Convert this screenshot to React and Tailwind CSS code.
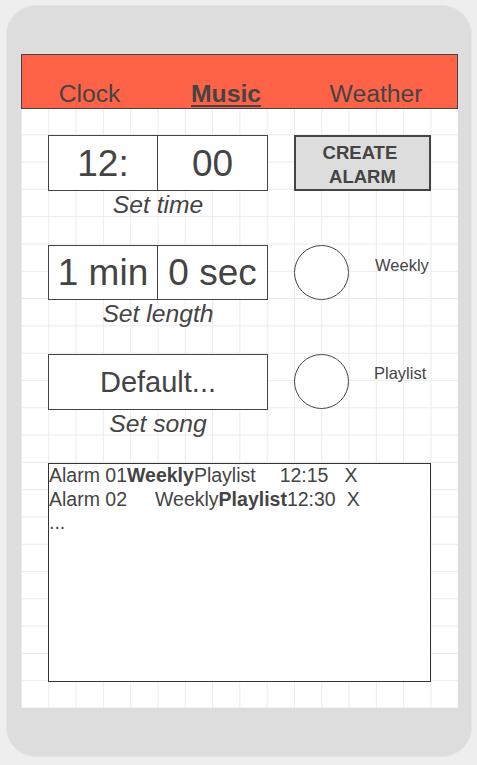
const font = "font-['Liberation_Sans',Arial,sans-serif]"

function ValueBox({ height, size, shift, children }) {
  return (
    <div className={`flex w-[220px] border border-[#444] bg-white ${height}`}>
      {children.map((text, i) => (
        <div
          key={i}
          className={`flex items-center justify-center ${size} ${shift} ${
            i === 0 && children.length > 1 ? 'w-[109px] border-r border-[#444]' : 'flex-1'
          }`}
        >
          {text}
        </div>
      ))}
    </div>
  )
}

function Field({ label, children }) {
  return (
    <div className="w-[220px]">
      {children}
      <div className="text-center text-[24.7px] italic leading-[28px]">{label}</div>
    </div>
  )
}

function Toggle({ label, offset, shift }) {
  return (
    <div className="ml-[26px] flex items-start">
      <div className="h-[55px] w-[55px] rounded-full border border-[#444] bg-white"></div>
      <span className={`text-[16.5px] ${offset} ${shift}`}>{label}</span>
    </div>
  )
}

export default function App() {
  return (
    <div className={`h-[765px] w-[477px] bg-[#eeeeee] pl-[6px] pt-[5px] text-[#444] ${font}`}>
      <div className="h-[752px] w-[466px] rounded-[30px] border border-[#e3e3e3] bg-[#dddddd] pl-[14px] pt-[48px]">
        <div className="h-[654px] w-[437px] bg-white bg-[linear-gradient(to_right,#ebebeb_1px,transparent_1px),linear-gradient(to_bottom,#ebebeb_1px,transparent_1px)] bg-[size:27.3px_27.3px] bg-[position:0px_-1.6px]">
          {/* tabs */}
          <div className="flex h-[55px] items-start border border-[#444] bg-[#ff6347] pt-[25px] text-[24.7px] leading-[28px]">
            <span className="ml-[7.5px] w-[120px] text-center">Clock</span>
            <span className="ml-[16.5px] w-[120px] text-center font-bold underline decoration-2 underline-offset-[3px]">
              Music
            </span>
            <span className="ml-[30px] w-[120px] text-center">Weather</span>
          </div>

          <div className="pl-[27px] pt-[26px]">
            <div className="flex items-start">
              <Field label="Set time">
                <ValueBox height="h-[56px]" size="text-[37px]" shift="pt-[2px]">
                  {['12:', '00']}
                </ValueBox>
              </Field>
              <button
                type="button"
                className="ml-[26px] h-[56px] w-[137px] border-2 border-[#444] bg-[#dddddd] pt-[3px] text-center text-[18.5px] font-bold leading-[23.3px] text-[#444]"
              >
                CREATE&nbsp;
                <br />
                ALARM
              </button>
            </div>

            <div className="mt-[26px] flex items-start">
              <Field label="Set length">
                <ValueBox height="h-[55px]" size="text-[37px]" shift="pt-[1px]">
                  {['1 min', '0 sec']}
                </ValueBox>
              </Field>
              <Toggle label="Weekly" offset="ml-[26px]" shift="mt-[8px]" />
            </div>

            <div className="mt-[26px] flex items-start">
              <Field label="Set song">
                <ValueBox height="h-[56px]" size="text-[29px]" shift="pt-[1px]">
                  {['Default...']}
                </ValueBox>
              </Field>
              <Toggle label="Playlist" offset="ml-[25px]" shift="mt-[7px]" />
            </div>

            <div className="mt-[25px] h-[219px] w-[383px] border border-[#333] bg-white text-[19.5px] leading-[23.5px] whitespace-pre">
              <div>
                Alarm 01<b>Weekly</b>Playlist
                <span className="ml-[24px]">12:15</span>
                <span className="ml-[16px]">X</span>
              </div>
              <div>
                Alarm 02<span className="ml-[28px]">Weekly</span>
                <b>Playlist</b>12:30
                <span className="ml-[11px]">X</span>
              </div>
              <div>...</div>
            </div>
          </div>
        </div>
      </div>
    </div>
  )
}
